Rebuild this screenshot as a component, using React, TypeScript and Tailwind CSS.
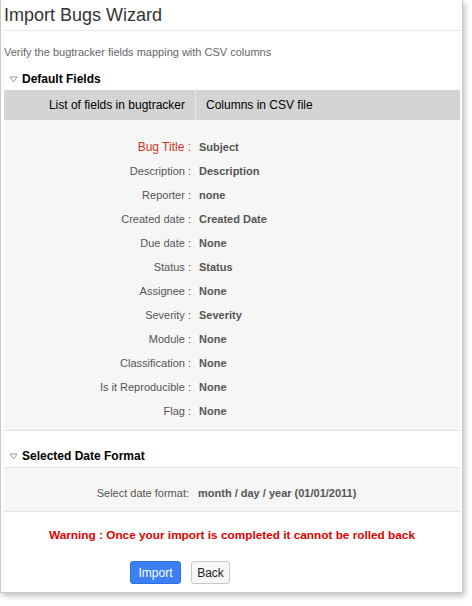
import React from 'react';

const fields = [
  { label: 'Description', value: 'Description' },
  { label: 'Reporter', value: 'none' },
  { label: 'Created date', value: 'Created Date' },
  { label: 'Due date', value: 'None' },
  { label: 'Status', value: 'Status' },
  { label: 'Assignee', value: 'None' },
  { label: 'Severity', value: 'Severity' },
  { label: 'Module', value: 'None' },
  { label: 'Classification', value: 'None' },
  { label: 'Is it Reproducible', value: 'None' },
  { label: 'Flag', value: 'None' },
];

const Caret = () => (
  <svg width="9" height="7" viewBox="0 0 9 7" className="mr-[4px] mt-[1px]">
    <polygon points="1,1 8,1 4.5,6" fill="none" stroke="#9a9a9a" strokeWidth="1" />
  </svg>
);

const SectionTitle: React.FC<{ title: string; className: string }> = ({ title, className }) => (
  <div className={`flex items-center pl-[5px] text-[12px] font-bold text-black ${className}`}>
    <Caret />
    {title}
  </div>
);

const App: React.FC = () => {
  return (
    <div className="w-[472px] h-[606px] bg-white font-['Liberation_Sans',Arial,sans-serif]">
      <div className="w-[463px] h-[593px] bg-white border-l border-r border-b border-[#c9c9c9] shadow-[2px_3px_6px_rgba(0,0,0,0.25)] pl-[3px] pr-[2px]">
        <h1 className="h-[31px] pt-[3px] text-[18px] leading-[24px] text-[#333] border-b border-[#e6e6e6]">
          Import Bugs Wizard
        </h1>
        <p className="pt-[14px] h-[30px] text-[11px] leading-[14px] text-[#666]">
          Verify the bugtracker fields mapping with CSV columns
        </p>

        <SectionTitle title="Default Fields" className="h-[29px] pt-[6px]" />
        <div className="flex h-[30px] bg-[#d4d4d4] text-[12px] text-black items-stretch">
          <div className="w-[191px] flex items-center justify-end pr-[10px]">
            List of fields in bugtracker
          </div>
          <div className="w-px bg-[#e6e6e6]" />
          <div className="flex-1 flex items-center pl-[10px]">Columns in CSV file</div>
        </div>

        <div className="bg-[#f6f6f6] pt-[15px] pb-[7px] border-b border-[#e3e3e3]">
          <div className="flex h-[24px] items-center">
            <div className="w-[187px] text-right text-[12px] text-[#d7321f]">Bug Title :</div>
            <div className="pl-[8px] text-[11px] font-bold text-[#555]">Subject</div>
          </div>
          {fields.map(({ label, value }) => (
            <div className="flex h-[24px] items-center" key={label}>
              <div className="w-[187px] text-right text-[11px] text-[#555]">{label} :</div>
              <div className="pl-[8px] text-[11px] font-bold text-[#555]">{value}</div>
            </div>
          ))}
        </div>

        <SectionTitle title="Selected Date Format" className="h-[36px] pt-[14px]" />
        <div className="bg-[#f6f6f6] h-[45px] pt-[8px] flex items-center border-t border-b border-[#e3e3e3]">
          <div className="w-[185px] text-right text-[11px] text-[#555]">Select date format:</div>
          <div className="pl-[9px] text-[11px] font-bold text-[#555]">
            month / day / year (01/01/2011)
          </div>
        </div>

        <p className="pt-[16px] text-center text-[11.8px] font-bold text-[#e00000] leading-[14px]">
          Warning : Once your import is completed it cannot be rolled back
        </p>

        <div className="flex gap-[10px] pl-[126px] pt-[19px]">
          <button
            type="button"
            className="w-[51px] h-[23px] rounded-[3px] bg-[#3d80f6] border border-[#2f6fe0] text-white text-[12px]"
          >
            Import
          </button>
          <button
            type="button"
            className="w-[39px] h-[23px] rounded-[3px] bg-[#f6f6f6] border border-[#c8c8c8] text-[#222] text-[12px]"
          >
            Back
          </button>
        </div>
      </div>
    </div>
  );
};

export default App;
